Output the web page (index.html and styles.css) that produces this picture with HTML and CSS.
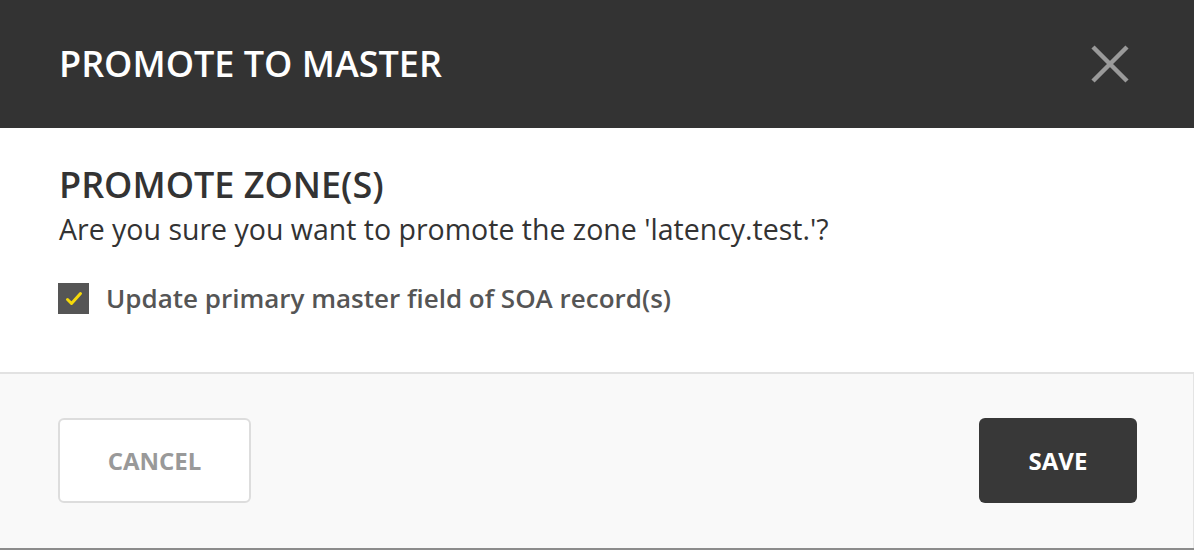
FILE: index.html
```html
<!DOCTYPE html>
<html>
<head>
<meta charset="utf-8">
<link rel="stylesheet" href="styles.css">
</head>
<body>
<div class="dialog">
  <div class="header">
    <h1 class="title">PROMOTE TO MASTER</h1>
    <button class="close" aria-label="Close">
      <svg width="40" height="40" viewBox="0 0 40 40"><path d="M3 3 L37 37 M37 3 L3 37" stroke="#9a9a9a" stroke-width="4.5" fill="none"/></svg>
    </button>
  </div>
  <div class="body">
    <h2 class="subtitle">PROMOTE ZONE(S)</h2>
    <p class="question">Are you sure you want to promote the zone 'latency.test.'?</p>
    <label class="check">
      <span class="box"><svg width="18" height="16" viewBox="0 0 18 16"><path d="M2.5 8.5 L6.5 12.5 L15.5 2.5" stroke="#f5d90a" stroke-width="3" fill="none" stroke-linecap="round" stroke-linejoin="round"/></svg></span>
      <span class="label">Update primary master field of SOA record(s)</span>
    </label>
  </div>
  <div class="footer">
    <button class="btn cancel">CANCEL</button>
    <button class="btn save">SAVE</button>
  </div>
</div>
</body>
</html>
```
FILE: styles.css
```css
html, body {
  margin: 0;
  padding: 0;
  background: #f9f9f9;
}
body {
  font-family: "Open Sans", "DejaVu Sans", sans-serif;
}
.dialog {
  width: 1194px;
  height: 550px;
  display: flex;
  flex-direction: column;
  box-sizing: border-box;
  border-bottom: 2px solid #8c8c8c;
}
.header {
  height: 128px;
  background: #333333;
  display: flex;
  align-items: center;
  justify-content: space-between;
  padding: 0 64px 0 59px;
  flex: none;
  box-sizing: border-box;
}
.title {
  margin: 0;
  color: #ffffff;
  font-size: 36px;
  font-weight: 600;
  line-height: 48px;
}
.close {
  background: none;
  border: 0;
  padding: 0;
  width: 40px;
  height: 40px;
  display: flex;
  cursor: pointer;
}
.body {
  background: #ffffff;
  height: 246px;
  flex: none;
  padding: 35px 59px 0;
  box-sizing: border-box;
  border-bottom: 2px solid #e2e2e2;
}
.subtitle {
  margin: 0;
  color: #333333;
  font-size: 36px;
  font-weight: 600;
  line-height: 44px;
}
.question {
  margin: 4px 0 0;
  color: #333333;
  font-size: 28.5px;
  line-height: 36px;
}
.check {
  display: flex;
  align-items: center;
  gap: 17px;
  margin-top: 34px;
}
.box {
  width: 31px;
  height: 31px;
  background: #555555;
  display: flex;
  align-items: center;
  justify-content: center;
  margin-left: -1px;
}
.label {
  color: #555555;
  font-size: 26px;
  font-weight: 600;
  line-height: 35px;
}
.footer {
  flex: 1;
  background: #f9f9f9;
  display: flex;
  align-items: center;
  justify-content: space-between;
  padding: 0 56px 1px 58px;
  border-right: 1px solid #e4e4e4;
}
.btn {
  font-family: "Open Sans", "DejaVu Sans", sans-serif;
  font-size: 24px;
  font-weight: 700;
  height: 85px;
  border-radius: 6px;
  box-sizing: border-box;
  cursor: pointer;
}
.cancel {
  width: 193px;
  background: #ffffff;
  border: 2px solid #dddddd;
  color: #999999;
}
.save {
  width: 158px;
  background: #383838;
  border: 0;
  color: #ffffff;
}
```
